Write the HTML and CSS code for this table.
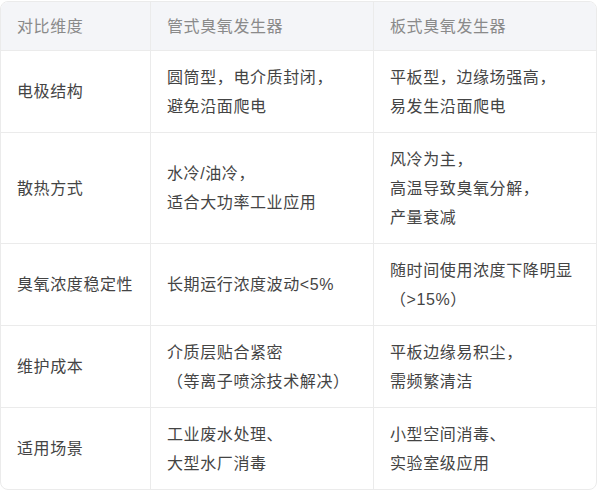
FILE: index.html
```html
<!DOCTYPE html>
<html lang="zh-CN">
<head>
<meta charset="utf-8">
<title>臭氧发生器对比</title>
<link rel="stylesheet" href="styles.css">
</head>
<body>
<div class="compare">
  <div class="cell head">对比维度</div>
  <div class="cell head">管式臭氧发生器</div>
  <div class="cell head last-col">板式臭氧发生器</div>

  <div class="cell">电极结构</div>
  <div class="cell">圆筒型，电介质封闭，<br>避免沿面爬电</div>
  <div class="cell last-col">平板型，边缘场强高，<br>易发生沿面爬电</div>

  <div class="cell">散热方式</div>
  <div class="cell">水冷/油冷，<br>适合大功率工业应用</div>
  <div class="cell last-col">风冷为主，<br>高温导致臭氧分解，<br>产量衰减</div>

  <div class="cell">臭氧浓度稳定性</div>
  <div class="cell">长期运行浓度波动&lt;5%</div>
  <div class="cell last-col">随时间使用浓度下降明显<br>（&gt;15%）</div>

  <div class="cell">维护成本</div>
  <div class="cell">介质层贴合紧密<br>（等离子喷涂技术解决）</div>
  <div class="cell last-col">平板边缘易积尘，<br>需频繁清洁</div>

  <div class="cell last-row">适用场景</div>
  <div class="cell last-row">工业废水处理、<br>大型水厂消毒</div>
  <div class="cell last-row last-col">小型空间消毒、<br>实验室级应用</div>
</div>
</body>
</html>
```
FILE: styles.css
```css
html, body {
  margin: 0;
  padding: 0;
  background: #ffffff;
}
body {
  padding-top: 1px;
  font-family: "Liberation Sans", "Noto Sans CJK SC", sans-serif;
  font-size: 16px;
  letter-spacing: 0.6px;
  color: #444444;
}
.compare {
  box-sizing: border-box;
  width: 597px;
  display: grid;
  grid-template-columns: 150px 223px 1fr;
  border: 1px solid #ebebeb;
  border-radius: 8px;
  overflow: hidden;
}
.cell {
  padding: 11.5px 16px;
  line-height: 29px;
  border-right: 1px solid #ebebeb;
  border-bottom: 1px solid #ebebeb;
  display: flex;
  flex-direction: column;
  justify-content: center;
}
.cell.head {
  background: #f4f5f8;
  color: #8a8a8a;
  padding-top: 9.5px;
  padding-bottom: 9.5px;
}
.cell.last-col {
  border-right: none;
}
.cell.last-row {
  border-bottom: none;
}
```
